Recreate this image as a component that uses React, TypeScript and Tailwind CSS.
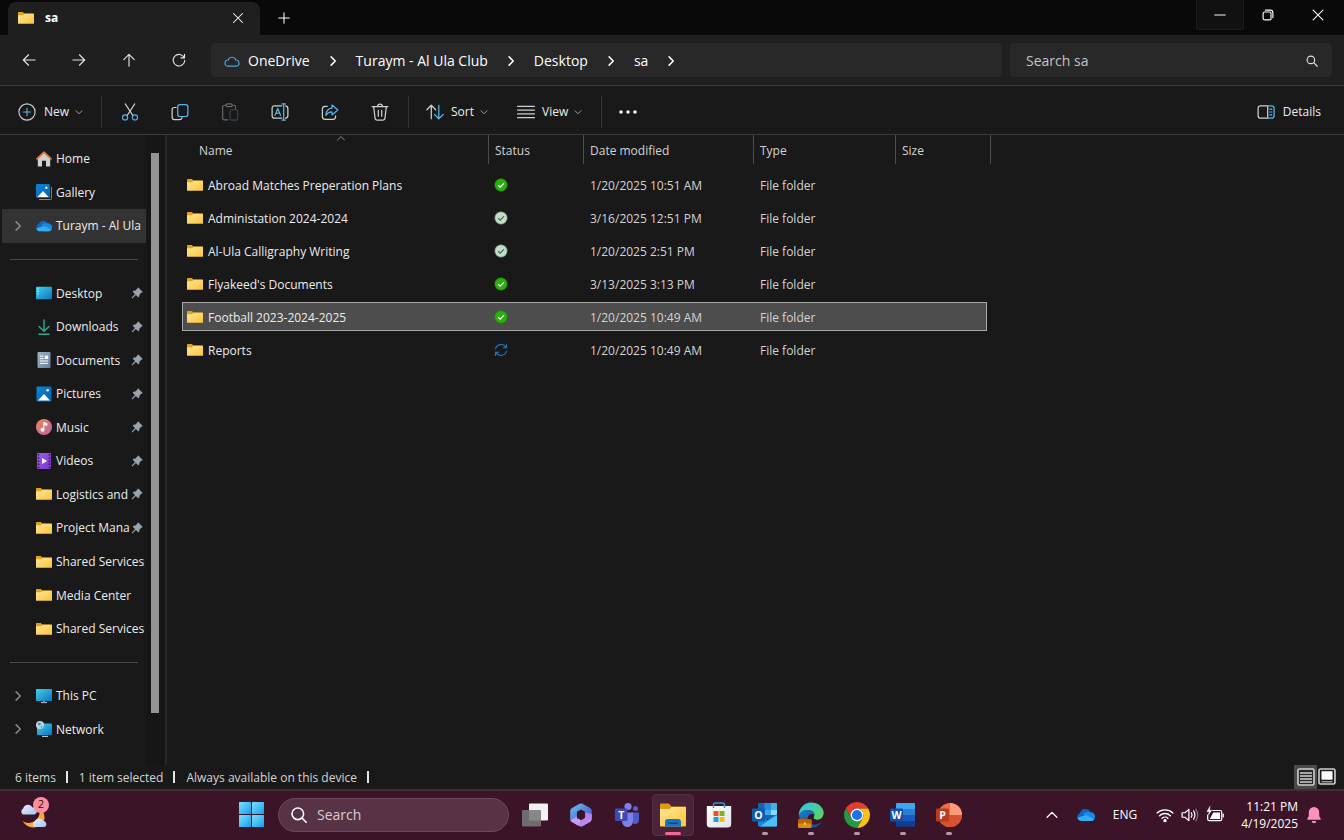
import type { ReactNode } from 'react';

type IconProps = { className?: string };

interface SideItem {
  label: string;
  icon: (p: IconProps) => ReactNode;
  pinned?: boolean;
  expandable?: boolean;
  active?: boolean;
}

interface FileRow {
  name: string;
  status: 'pinned' | 'local' | 'sync';
  date: string;
  selected?: boolean;
}

/* ---------- shared gradients ---------- */

function Gradients() {
  const list = [
    { id: 'folder', from: '#ffe69a', to: '#fcc436' },
    { id: 'blue', from: '#0a84d6', to: '#0563b0' },
    { id: 'teal', from: '#3fd3e4', to: '#0e72c4' },
    { id: 'music', from: '#f0855a', to: '#b3679f' },
    { id: 'video', from: '#a05cf0', to: '#7a35c8' },
    { id: 'doc', from: '#9fb4c8', to: '#61809c' },
    { id: 'win', from: '#7fe0ff', to: '#109fee' },
    { id: 'copilotA', from: '#6fc3f5', to: '#3a4cc0' },
    { id: 'copilotB', from: '#8a6ce8', to: '#d09af0' },
    { id: 'edgeA', from: '#2fc2ee', to: '#63d64c' },
    { id: 'edgeB', from: '#1a7fd0', to: '#0c4a96' },
    { id: 'store', from: '#ffffff', to: '#dfe3ea' },
    { id: 'cloud', from: '#e6effc', to: '#a9c4f0' },
  ];
  return (
    <svg className="absolute" width="0" height="0" aria-hidden="true">
      <defs>
        {list.map((g) => (
          <linearGradient key={g.id} id={g.id} x1="0" y1="0" x2="1" y2="1">
            <stop offset="0" stopColor={g.from} />
            <stop offset="1" stopColor={g.to} />
          </linearGradient>
        ))}
      </defs>
    </svg>
  );
}

/* ---------- small line icons ---------- */

function Line({ d, className = 'w-4 h-4', sw = 1.2, children }: { d?: string; className?: string; sw?: number; children?: ReactNode }) {
  return (
    <svg viewBox="0 0 16 16" className={className} fill="none" stroke="currentColor" strokeWidth={sw} strokeLinecap="round" strokeLinejoin="round" aria-hidden="true">
      {d && <path d={d} />}
      {children}
    </svg>
  );
}

const Chevron = ({ className = 'w-2 h-2 text-[#a0a0a0]' }: IconProps) => <Line className={className} sw={2} d="M2 5.5l6 6 6-6" />;
const ChevronRight = ({ className = 'w-3 h-3' }: IconProps) => <Line className={className} sw={2} d="M5.500 2.500L11 8l-5.500 5.500" />;

/* ---------- folder + sidebar icons ---------- */

const FolderIcon = ({ className = 'w-4 h-4' }: IconProps) => (
  <svg viewBox="0 0 16 16" className={className} aria-hidden="true">
    <path d="M0 2.600Q0 2 .6 2H4.800L6.400 3.400H15.400Q16 3.400 16 4V8H0Z" fill="#e0a21a" />
    <path d="M0 5.200H5L6.600 3.800H15.400Q16 3.800 16 4.400V13.200Q16 13.800 15.400 13.800H.6Q0 13.800 0 13.200Z" fill="url(#folder)" />
  </svg>
);

const HomeIcon = ({ className }: IconProps) => (
  <svg viewBox="0 0 16 16" className={className} aria-hidden="true">
    <path d="M1.800 7L8 1.500 14.200 7V15.500H10V9.800H6V15.500H1.800Z" fill="#d0d0d0" />
    <path d="M.9 7.800L8 1.200l7.100 6.600" fill="none" stroke="#e5733a" strokeWidth="1.700" strokeLinecap="round" strokeLinejoin="round" />
  </svg>
);

const PicturesIcon = ({ className }: IconProps) => (
  <svg viewBox="0 0 16 16" className={className} aria-hidden="true">
    <rect x=".5" y=".5" width="15" height="15" rx="1.200" fill="url(#blue)" />
    <path d="M2 14.500L8 8l6 6.500Z" fill="#fff" />
    <circle cx="11.600" cy="4.200" r="1.300" fill="#fff" />
  </svg>
);

const GalleryIcon = ({ className }: IconProps) => (
  <svg viewBox="0 0 16 16" className={className} aria-hidden="true">
    <path d="M3 15.500H14.600Q15.600 15.500 15.600 14.500V3" fill="none" stroke="#3d9be0" strokeWidth="1" />
    <rect x="0" y="0" width="14" height="14" rx="1.200" fill="url(#blue)" />
    <path d="M1.500 13L7 7l5.500 6Z" fill="#fff" />
    <circle cx="10.300" cy="3.800" r="1.200" fill="#fff" />
  </svg>
);

const OneDriveIcon = ({ className }: IconProps) => (
  <svg viewBox="0 0 16 16" className={className} aria-hidden="true">
    <path d="M3.800 13.300A3.800 3.800 0 0 1 2.700 6 5 5 0 0 1 11.900 5.500 3.900 3.900 0 0 1 12.400 13.300Z" fill="#0f66c4" />
    <path d="M5.500 6.600Q8 4.500 11.900 5.600A3.900 3.900 0 0 1 16 9.400 3.900 3.900 0 0 1 12.400 13.300H8Z" fill="#1a8ae0" />
    <path d="M3.800 13.300Q1 13 .2 10.400L7.200 8.300Q9 7.800 10.500 8.900L15.200 11.900Q14.200 13.300 12.400 13.300Z" fill="#35adf4" />
  </svg>
);

const DesktopIcon = ({ className }: IconProps) => (
  <svg viewBox="0 0 16 16" className={className} aria-hidden="true">
    <rect x="0" y="1.800" width="16" height="12.400" rx="1" fill="url(#teal)" />
    <path d="M1.400 4h1.300M1.400 6.500h1.300M1.400 9h1.300" stroke="#c9f6ff" strokeWidth="1" />
  </svg>
);

const DownloadsIcon = ({ className }: IconProps) => (
  <Line className={`${className} text-[#35a88a]`} sw={1.4} d="M8 1v11M3 7.500L8 12.200 13 7.500M3 15.200h10" />
);

const DocumentsIcon = ({ className }: IconProps) => (
  <svg viewBox="0 0 16 16" className={className} aria-hidden="true">
    <rect x="1.500" y="0" width="13" height="16" rx="1" fill="url(#doc)" />
    <path d="M4 4.200h3.500M4 6.600h3.500M4 9h8M4 11.400h8" stroke="#fff" strokeWidth="1" />
    <rect x="8.800" y="3.600" width="3.400" height="3.400" fill="#fff" />
  </svg>
);

const MusicIcon = ({ className }: IconProps) => (
  <svg viewBox="0 0 16 16" className={className} aria-hidden="true">
    <circle cx="8" cy="8" r="8" fill="url(#music)" />
    <circle cx="6.500" cy="10.800" r="2" fill="#fff" />
    <path d="M7.900 10.800V3.500L11 4.700V6.400L7.900 5.400" fill="#fff" stroke="#fff" strokeWidth="1" />
  </svg>
);

const VideosIcon = ({ className }: IconProps) => (
  <svg viewBox="0 0 16 16" className={className} aria-hidden="true">
    <rect x="1" y="0" width="14" height="16" rx="1" fill="url(#video)" />
    <path d="M2.500 1v14M13.500 1v14" stroke="#32105e" strokeWidth="1.400" strokeDasharray="1.500 1.700" />
    <path d="M6 5l5 3-5 3Z" fill="#fff" />
  </svg>
);

const PCIcon = ({ className }: IconProps) => (
  <svg viewBox="0 0 16 16" className={className} aria-hidden="true">
    <rect x="0" y="1" width="16" height="12" rx=".8" fill="url(#teal)" />
    <path d="M5 14.500h6" stroke="#b8c4cc" strokeWidth="1.200" />
    <path d="M7 13h2v1.500H7Z" fill="#7d8a92" />
  </svg>
);

const NetworkIcon = ({ className }: IconProps) => (
  <svg viewBox="0 0 16 16" className={className} aria-hidden="true">
    <rect x="1" y="2.500" width="15" height="11.500" rx=".8" fill="url(#teal)" />
    <path d="M6 15.400h6" stroke="#b8c4cc" strokeWidth="1.200" />
    <circle cx="4" cy="4" r="4" fill="#b9d3e2" />
    <path d="M1.500 2.500l2.500-1 1 1.700-2 1.300ZM4.500 5.500l2-.6-.8 2.200Z" fill="#3a83b5" />
  </svg>
);

const PinIcon = () => (
  <svg viewBox="0 0 12 12" className="w-3 h-3 shrink-0" aria-hidden="true">
    <path d="M7.300.6L11.500 4.700Q11.600 5.500 10.600 5.600L8.500 7.500Q8.700 9.500 7.400 10.400L4.900 8 1.300 11.400.6 10.800 4 7.100 1.700 4.700Q2.500 3.400 4.500 3.600L6.400 1.500Q6.500.5 7.300.6Z" fill="#9aa3ab" />
  </svg>
);

/* ---------- command bar icons ---------- */

const ICON = 'w-[18px] h-[18px]';

const NewIcon = () => (
  <Line className={ICON} sw={1}>
    <circle cx="8" cy="8" r="7.200" stroke="#d0d0d0" />
    <path d="M8 4.800v6.400M4.800 8h6.400" stroke="#55b4ee" />
  </Line>
);
const CutIcon = () => (
  <Line className={ICON} sw={1}>
    <path d="M3.800 .8L10.600 11.200M12.200 .8L5.400 11.200" stroke="#d0d0d0" />
    <circle cx="3.600" cy="12.800" r="2.300" stroke="#55b4ee" />
    <circle cx="12.400" cy="12.800" r="2.300" stroke="#55b4ee" />
  </Line>
);
const CopyIcon = () => (
  <Line className={ICON} sw={1.1}>
    <path d="M4.500 4H3Q1 4 1 6V12.500Q1 14.800 3.200 14.800H7.500Q9.500 14.800 9.800 13" stroke="#d0d0d0" />
    <rect x="6" y="1.500" width="9" height="10.500" rx="2" stroke="#55b4ee" />
  </Line>
);
const PasteIcon = () => (
  <Line className={ICON} sw={1}>
    <path d="M6 15H3Q1.500 15 1.500 13.500V3.500Q1.500 2 3 2H4.500M10 2h1.500Q13 2 13 3.500V5" stroke="#6a6a6a" />
    <rect x="4.500" y=".8" width="5.500" height="2.400" rx="1.200" stroke="#6a6a6a" />
    <rect x="8" y="6" width="6.800" height="9.200" rx="1.300" stroke="#31495a" />
  </Line>
);
const RenameIcon = () => (
  <Line className={ICON} sw={1.1}>
    <path d="M9.500 2.500H3.200Q1 2.500 1 4.700V11.300Q1 13.500 3.200 13.500H9.500M13 2.600Q15 3 15 5V11Q15 13 13 13.400" stroke="#d0d0d0" />
    <path d="M3.500 11L6 4.800 8.500 11M4.400 9h3.200M9.800 .8h3M9.800 15.200h3M11.300 .8v14.400" stroke="#55b4ee" />
  </Line>
);
const ShareIcon = () => (
  <Line className={ICON} sw={1.1}>
    <path d="M5.500 3H3.700Q1.200 3 1.200 5.500V12Q1.200 14.500 3.700 14.500H10.500Q13 14.500 13 12V11.500" stroke="#d0d0d0" />
    <path d="M9.800 1.800L15 6.300 9.800 10.600V8Q6.500 7.800 4.300 11 4.600 5 9.800 4.500Z" stroke="#55b4ee" />
  </Line>
);
const DeleteIcon = () => (
  <Line className={ICON} sw={1.1}>
    <path d="M1 3.200h14M5.700 3Q6 .9 8 .9T10.300 3M2.400 3.400L3.600 13.300Q3.800 15.200 5.600 15.200H10.400Q12.200 15.200 12.400 13.300L13.600 3.400M6.500 6.500v5.200M9.500 6.500v5.200" stroke="#d0d0d0" />
  </Line>
);
const SortIcon = () => (
  <Line className={ICON} sw={1.1}>
    <path d="M4.700 14V2M.8 6L4.700 2 8.600 6" stroke="#d0d0d0" />
    <path d="M11.400 2v12M7.600 10.200L11.400 14 15.300 10.200" stroke="#55b4ee" />
  </Line>
);
const ViewIcon = () => <Line className={`${ICON} text-[#d0d0d0]`} sw={1} d="M.5 3h15M.5 6.300h15M.5 9.700h15M.5 13h15" />;
const DetailsIcon = () => (
  <Line className={ICON} sw={1.1}>
    <path d="M9.500 2.500H3.200Q1 2.500 1 4.700V11.300Q1 13.500 3.200 13.500H9.500Z" stroke="#d0d0d0" />
    <path d="M9.500 2.500H13Q15.200 2.500 15.200 4.700V11.300Q15.200 13.500 13 13.500H9.500M11.400 5.500h1.800M11.400 8h1.800M11.400 10.500h1.800" stroke="#55b4ee" />
  </Line>
);

/* ---------- status icons ---------- */

function StatusIcon({ status }: { status: FileRow['status'] }) {
  if (status === 'sync') {
    return (
      <svg viewBox="0 0 14 14" className="w-[14px] h-[14px]" fill="none" stroke="#1f78c4" strokeWidth="1.100" strokeLinecap="round" role="img" aria-label="Syncing">
        <path d="M1.500 5.800A5.700 5.700 0 0 1 12 4.500M12.500 1.600V4.700H9.300M12.500 8.200A5.700 5.700 0 0 1 2 9.500M1.500 12.400V9.300H4.700" />
      </svg>
    );
  }
  const pinned = status === 'pinned';
  return (
    <svg viewBox="0 0 14 14" className="w-[14px] h-[14px]" role="img" aria-label={pinned ? 'Always available' : 'Available on this device'}>
      <circle cx="7" cy="7" r="6.200" fill={pinned ? '#2bb00d' : '#c3dccb'} stroke={pinned ? '#1f8a08' : '#4f8a62'} strokeWidth=".6" />
      <path d="M4.200 7.200l2 1.900 3.700-3.700" fill="none" stroke={pinned ? '#fff' : '#3f6b4d'} strokeWidth="1.200" />
    </svg>
  );
}

/* ---------- taskbar icons ---------- */

const APP = 'w-[26px] h-[26px]';

const Letter = ({ x, children }: { x: number; children: string }) => (
  <text x={x} y="16.800" fontSize="10.500" fontWeight="700" fill="#fff" textAnchor="middle" fontFamily="Open Sans, sans-serif">
    {children}
  </text>
);

const TaskViewIcon = () => (
  <svg viewBox="0 0 26 26" className={APP} aria-hidden="true">
    <rect x="7" y="1.500" width="19" height="17" rx="1" fill="#f1f1f1" />
    <rect x="0" y="8" width="19" height="16.500" rx="1" fill="#77777a" opacity=".88" />
  </svg>
);

const M365Icon = () => (
  <svg viewBox="0 0 24 24" className="w-6 h-6" aria-hidden="true">
    <path d="M10.500 .8Q12 0 13.500 .8L21 5Q22.800 6 22.800 8V15L16 12V8.800L12 6.500 8 8.800V18L3 19Q1.200 18 1.200 16V8Q1.200 6 3 5Z" fill="url(#copilotA)" />
    <path d="M22.800 11V16Q22.800 18 21 19L13.500 23.200Q12 24 10.500 23.200L3 19 9.500 15.500 12 17.200 16 14.800V9Z" fill="url(#copilotB)" />
    <path d="M1.400 17.200L8 13.500V15.200L12 17.500 9 22.400 3 19Q1.800 18.400 1.400 17.200Z" fill="#c79bf2" />
    <path d="M11.500 7.500L16 9.800V14.500L12.500 16.500 8.500 14.500V9.300Z" fill="#3b1427" />
  </svg>
);

const TeamsIcon = () => (
  <svg viewBox="0 0 26 26" className={APP} aria-hidden="true">
    <circle cx="21.500" cy="6.500" r="2.500" fill="#5b62c5" />
    <circle cx="14" cy="4.500" r="3.600" fill="#7b83eb" />
    <path d="M18 10.500H25V17.500Q25 22 21 22 18 22 18 18Z" fill="#5059c9" />
    <path d="M8 10.500H19V18.500Q19 25 13.500 25 8 25 8 18.500Z" fill="#7b83eb" />
    <rect x="1" y="6.500" width="12.500" height="12.500" rx="1.200" fill="#4149b4" />
    <Letter x={7.2}>T</Letter>
  </svg>
);

const ExplorerIcon = () => (
  <svg viewBox="0 0 26 26" className={APP} aria-hidden="true">
    <path d="M0 2.500Q0 1.500 1 1.500H9L11.500 4.500H25Q26 4.500 26 5.500V12H0Z" fill="#dd9c12" />
    <path d="M0 7Q6 7 9.500 7L12 5H25Q26 5 26 6V23.500Q26 24.500 25 24.500H1Q0 24.500 0 23.500Z" fill="url(#folder)" />
    <path d="M5 24.500V20Q5 17 8 17H18Q21 17 21 20V24.500Z" fill="#1674c6" />
    <rect x="8" y="20.500" width="10" height="1.500" rx=".7" fill="#0b4a8a" />
  </svg>
);

const StoreIcon = () => (
  <svg viewBox="0 0 26 26" className={APP} aria-hidden="true">
    <path d="M7.500 6V3Q7.500 1 9.500 1H16.500Q18.500 1 18.500 3V6" fill="none" stroke="#2f96d8" strokeWidth="1.500" />
    <path d="M.8 4H25.200V22Q25.200 25.500 21.700 25.500H4.300Q.8 25.500 .8 22Z" fill="url(#store)" />
    <path d="M7.500 4V6M18.500 4V6" stroke="#2f96d8" strokeWidth="1.500" />
    <path d="M7.500 9H12.500V14H7.500Z" fill="#f04f23" />
    <path d="M13.500 9H18.500V14H13.500Z" fill="#7cb81b" />
    <path d="M7.500 15h5v5H7.500Z" fill="#1b9fe5" />
    <path d="M13.500 15H18.500v5H13.500Z" fill="#fab90f" />
  </svg>
);

const OutlookIcon = () => (
  <svg viewBox="0 0 26 26" className={APP} aria-hidden="true">
    <rect x="6" y="1" width="19" height="16" rx="1.200" fill="#1066b5" />
    <path d="M12.500 1H19V8H12.500Z" fill="#2a8bd8" />
    <path d="M19 1H24Q25 1 25 2V8H19Z" fill="#43b0ee" />
    <path d="M12.500 8H19V13H12.500Z" fill="#3aa7ea" />
    <path d="M19 8H25V13H19Z" fill="#8ad8fa" />
    <path d="M6 12L15.500 18 25 12V23.500Q25 24.500 24 24.500H7Q6 24.500 6 23.500Z" fill="#1a86da" />
    <path d="M25 13V23.500Q25 24.500 24 24.500H8L18 17.500Z" fill="#4cc0f5" />
    <rect x="0" y="6.500" width="13" height="13" rx="1.200" fill="#0e5cab" />
    <Letter x={6.5}>O</Letter>
  </svg>
);

const EdgeIcon = () => (
  <svg viewBox="0 0 26 26" className={APP} aria-hidden="true">
    <path d="M.8 13A12.300 12.300 0 0 1 13.300 .6Q21 .6 24.700 7 27 12 24 15.800 20.500 18.800 16.500 17 15 16 16.300 14 17 9 11 8 4 8 .8 13Z" fill="url(#edgeA)" />
    <path d="M.8 13Q3.500 7.500 10.500 8 16 8.600 16.700 13 12 10.500 10 14.500 8.500 20.500 15 22.500 19 23.500 23.500 20.300 19 26.800 11.500 25.200 1.500 22.500 .8 13Z" fill="url(#edgeB)" />
    <rect x="0" y="17.500" width="13.500" height="8.500" rx="1" fill="#dc8a16" />
    <path d="M0 17.500h13.500v4H0Z" fill="#b8620a" />
    <path d="M4.500 17.500V16h4.500v1.500" fill="none" stroke="#8a4808" strokeWidth="1" />
    <rect x="5.800" y="20.500" width="2" height="2.200" fill="#ffd166" />
  </svg>
);

const ChromeIcon = () => (
  <svg viewBox="0 0 24 24" className={APP} aria-hidden="true">
    <path d="M12 6H22.390A12 12 0 0 0 1.610 6L6.800 15A6 6 0 0 1 12 6Z" fill="#e33b2e" />
    <path d="M17.200 15L12 24A12 12 0 0 0 22.390 6H12A6 6 0 0 1 17.200 15Z" fill="#fbc116" />
    <path d="M6.800 15L1.610 6A12 12 0 0 0 12 24L17.200 15A6 6 0 0 1 6.800 15Z" fill="#229a46" />
    <circle cx="12" cy="12" r="6" fill="#fff" />
    <circle cx="12" cy="12" r="4.700" fill="#1a73e8" />
  </svg>
);

const WordIcon = () => (
  <svg viewBox="0 0 26 26" className={APP} aria-hidden="true">
    <path d="M6 2.200Q6 1 7.200 1H24Q25 1 25 2.200V7H6Z" fill="#41a5ee" />
    <path d="M6 7H25V13H6Z" fill="#2b7cd3" />
    <path d="M6 13H25V19H6Z" fill="#185abd" />
    <path d="M6 19H25V23.500Q25 24.700 24 24.700H7.200Q6 24.700 6 23.500Z" fill="#103f91" />
    <rect x="0" y="6.500" width="13" height="13" rx="1.200" fill="#174fa8" />
    <Letter x={6.5}>W</Letter>
  </svg>
);

const PowerPointIcon = () => (
  <svg viewBox="0 0 26 26" className={APP} aria-hidden="true">
    <circle cx="14" cy="13" r="12" fill="#ed6c47" />
    <path d="M14 1A12 12 0 0 1 26 13H14Z" fill="#ff9a78" />
    <path d="M2 13H26A12 12 0 0 1 2 13Z" fill="#d35230" />
    <rect x="0" y="6.500" width="13" height="13" rx="1.200" fill="#b83c1d" />
    <Letter x={6.5}>P</Letter>
  </svg>
);

const WeatherIcon = () => (
  <svg viewBox="0 0 28 28" className="w-7 h-7" aria-hidden="true">
    <path d="M19 7A11 11 0 0 1 2.500 20Q7 27 14.500 26.500 23 25.500 24.500 18 25 11 19 7Z" fill="#f6a93b" />
    <path d="M3 13.500A3.300 3.300 0 0 1 3.200 7.600 5 5 0 0 1 12.500 6.500 3.500 3.500 0 0 1 14 13.500Z" fill="url(#cloud)" />
    <path d="M14.500 26A3 3 0 0 1 14.700 20.600 4.500 4.500 0 0 1 23 20 3.100 3.100 0 0 1 24.300 26Z" fill="url(#cloud)" />
  </svg>
);

/* ---------- data ---------- */

const sideItems: (SideItem | null)[] = [
  { label: 'Home', icon: HomeIcon },
  { label: 'Gallery', icon: GalleryIcon },
  { label: 'Turaym - Al Ula', icon: OneDriveIcon, expandable: true, active: true },
  null,
  { label: 'Desktop', icon: DesktopIcon, pinned: true },
  { label: 'Downloads', icon: DownloadsIcon, pinned: true },
  { label: 'Documents', icon: DocumentsIcon, pinned: true },
  { label: 'Pictures', icon: PicturesIcon, pinned: true },
  { label: 'Music', icon: MusicIcon, pinned: true },
  { label: 'Videos', icon: VideosIcon, pinned: true },
  { label: 'Logistics and', icon: FolderIcon, pinned: true },
  { label: 'Project Mana', icon: FolderIcon, pinned: true },
  { label: 'Shared Services', icon: FolderIcon },
  { label: 'Media Center', icon: FolderIcon },
  { label: 'Shared Services', icon: FolderIcon },
  null,
  { label: 'This PC', icon: PCIcon, expandable: true },
  { label: 'Network', icon: NetworkIcon, expandable: true },
];

const files: FileRow[] = [
  { name: 'Abroad Matches Preperation Plans', status: 'pinned', date: '1/20/2025 10:51 AM' },
  { name: 'Administation 2024-2024', status: 'local', date: '3/16/2025 12:51 PM' },
  { name: 'Al-Ula Calligraphy Writing', status: 'local', date: '1/20/2025 2:51 PM' },
  { name: "Flyakeed's Documents", status: 'pinned', date: '3/13/2025 3:13 PM' },
  { name: 'Football 2023-2024-2025', status: 'pinned', date: '1/20/2025 10:49 AM', selected: true },
  { name: 'Reports', status: 'sync', date: '1/20/2025 10:49 AM' },
];

const commands = [
  { label: 'Cut', icon: CutIcon },
  { label: 'Copy', icon: CopyIcon },
  { label: 'Paste', icon: PasteIcon },
  { label: 'Rename', icon: RenameIcon },
  { label: 'Share', icon: ShareIcon },
  { label: 'Delete', icon: DeleteIcon },
];

const apps = [
  { label: 'Task view', icon: TaskViewIcon },
  { label: 'Microsoft 365', icon: M365Icon },
  { label: 'Teams', icon: TeamsIcon },
  { label: 'File Explorer', icon: ExplorerIcon, active: true },
  { label: 'Store', icon: StoreIcon },
  { label: 'Outlook', icon: OutlookIcon, running: true },
  { label: 'Edge', icon: EdgeIcon, running: true },
  { label: 'Chrome', icon: ChromeIcon, running: true },
  { label: 'Word', icon: WordIcon, running: true },
  { label: 'PowerPoint', icon: PowerPointIcon, running: true },
];

/* ---------- sections ---------- */

function TitleBar() {
  return (
    <header className="flex h-[35px] items-end bg-[#090909] pl-2">
      <div className="flex h-[33px] w-[252px] items-center rounded-t-lg bg-[#1f1f1f] pb-[2px] pl-[10px] pr-4">
        <FolderIcon className="w-4 h-4" />
        <span className="ml-[11px] flex-1 text-xs font-bold text-white">sa</span>
        <button aria-label="Close tab" className="text-white">
          <Line className="w-3 h-3" sw={1.4} d="M2 2l12 12M14 2L2 14" />
        </button>
      </div>
      <button aria-label="New tab" className="flex h-[33px] w-12 items-center justify-center pb-[2px] text-white">
        <Line className="w-3 h-3" sw={1.4} d="M8 1v14M1 8h14" />
      </button>
      <div className="ml-auto flex self-start text-white">
        <button aria-label="Minimize" className="flex h-[30px] w-12 items-center justify-center border border-t-0 border-[#1c1c1c] bg-[#111]">
          <Line className="w-3 h-3" sw={1.3} d="M1 8h14" />
        </button>
        <button aria-label="Restore" className="flex h-[30px] w-12 items-center justify-center">
          <Line className="w-3 h-3" sw={1.5}>
            <rect x="1.500" y="4" width="10.500" height="10.500" rx="2" />
            <path d="M4.500 1.500H11Q14.500 1.500 14.500 5V11.500" />
          </Line>
        </button>
        <button aria-label="Close" className="flex h-[30px] w-[52px] items-center justify-center">
          <Line className="w-3 h-3" sw={1.4} d="M1.500 1.500l13 13M14.500 1.500l-13 13" />
        </button>
      </div>
    </header>
  );
}

const navButtons = [
  { label: 'Back', d: 'M15 8H1.500M7.500 2L1.500 8l6 6' },
  { label: 'Forward', d: 'M1 8h13.500M8.500 2l6 6-6 6' },
  { label: 'Up', d: 'M8 15V1.500M2 7.500l6-6 6 6' },
  { label: 'Refresh', d: 'M14 5.500A6.600 6.600 0 1 0 14.600 8.500M14.300 1.500V5.600H10.200' },
];

function NavBar() {
  return (
    <div className="flex h-[50px] items-center bg-[#1f1f1f] pl-1 pr-3">
      {navButtons.map((b) => (
        <button key={b.label} aria-label={b.label} className="flex h-8 w-[50px] shrink-0 items-center justify-center text-[#e4e4e4]">
          <Line className="w-[14px] h-[14px]" sw={1.3} d={b.d} />
        </button>
      ))}
      <nav aria-label="Address" className="ml-[7px] flex h-[34px] flex-1 items-center rounded bg-[#282828] pl-[13px] pt-px text-sm text-white">
        <svg viewBox="0 0 16 12" className="mr-2 h-3 w-4" fill="none" stroke="#4aa3d8" strokeWidth="1.200" aria-hidden="true">
          <path d="M4 11.200A3.100 3.100 0 0 1 4.200 5 4 4 0 0 1 11.800 5 3.100 3.100 0 0 1 12 11.200Z" />
        </svg>
        {['OneDrive', 'Turaym - Al Ula Club', 'Desktop', 'sa'].map((c) => (
          <span key={c} className="flex items-center">
            <a href="#" className="whitespace-nowrap">{c}</a>
            <ChevronRight className="mx-[17px] w-3 h-3" />
          </span>
        ))}
      </nav>
      <label className="ml-2 flex h-[34px] w-[322px] items-center rounded bg-[#282828] px-4 pt-px text-sm">
        <span className="sr-only">Search folder</span>
        <input type="text" placeholder="Search sa" className="h-full min-w-0 flex-1 bg-transparent outline-none placeholder:text-[#c4c4c4]" />
        <Line className="-mr-[2px] w-3 h-3 text-[#e4e4e4]" sw={1.5}>
          <circle cx="6.500" cy="6.500" r="5" />
          <path d="M10.300 10.300L15 15" />
        </Line>
      </label>
    </div>
  );
}

function CommandBar() {
  return (
    <div className="flex h-[50px] items-center border-y border-[#3c3c3c] bg-[#191919] pt-[3px] text-xs text-[#ededed]">
      <button className="flex w-[101px] shrink-0 items-center pl-[18px]">
        <NewIcon />
        <span className="ml-2 mr-[6px]">New</span>
        <Chevron />
      </button>
      <div className="mr-[3px] h-8 w-px bg-[#333]" />
      {commands.map(({ label, icon: Icon }) => (
        <button key={label} aria-label={label} className="flex h-8 w-[50px] shrink-0 items-center justify-center">
          <Icon />
        </button>
      ))}
      <div className="ml-[3px] h-8 w-px bg-[#333]" />
      <button className="ml-[17px] flex items-center">
        <SortIcon />
        <span className="ml-[7px] mr-[6px]">Sort</span>
        <Chevron />
      </button>
      <button className="ml-[29px] flex items-center">
        <ViewIcon />
        <span className="ml-[7px] mr-[6px]">View</span>
        <Chevron />
      </button>
      <div className="ml-[19px] h-8 w-px bg-[#333]" />
      <button aria-label="See more" className="ml-4 flex items-center">
        <svg viewBox="0 0 20 20" className="w-5 h-5" fill="#f0f0f0" aria-hidden="true">
          <circle cx="3" cy="10" r="1.800" />
          <circle cx="10" cy="10" r="1.800" />
          <circle cx="17" cy="10" r="1.800" />
        </svg>
      </button>
      <button className="ml-auto mr-[23px] flex items-center gap-2">
        <DetailsIcon />
        Details
      </button>
    </div>
  );
}

function Sidebar() {
  return (
    <aside className="flex w-[167px] shrink-0 border-r-2 border-[#282828]">
      <ul className="flex min-w-0 flex-1 flex-col pb-[19px] pl-[2px] pt-[7px]">
        {sideItems.map((item, i) => {
          if (!item) {
            return (
              <li key={i} className="flex flex-1 items-center px-2" role="separator">
                <div className="h-px w-full bg-[#4a4a4a]" />
              </li>
            );
          }
          const Icon = item.icon;
          return (
            <li key={i} className={`flex min-h-6 flex-1 ${item.active ? 'bg-[#333]' : ''}`}>
              <a href="#" className="flex min-w-0 flex-1 items-center pr-[3px] text-xs text-[#ececec]">
                <span className="flex w-[34px] shrink-0 pl-[10px]">{item.expandable && <ChevronRight className="w-3 h-3 text-[#8a8a8a]" />}</span>
                <Icon className="w-4 h-4 shrink-0" />
                <span className="ml-1 min-w-0 flex-1 whitespace-nowrap pt-px">{item.label}</span>
                {item.pinned && <PinIcon />}
              </a>
            </li>
          );
        })}
      </ul>
      <div className="w-[19px] bg-[#161616] pb-[52px] pl-[5px] pt-[18px]">
        <div className="h-full w-2 bg-[#949494]" />
      </div>
    </aside>
  );
}

const HEAD = 'flex h-[29px] items-center border-r border-[#4c4c4c] pt-[2px] font-normal';

function FileTable() {
  return (
    <main className="min-w-0 flex-1 pl-[15px]">
      <table className="-mt-1 w-[805px] table-fixed border-separate border-spacing-x-0 border-spacing-y-1 text-left text-xs text-[#d4d4d4]">
        <thead>
          <tr className="h-[31px] align-top">
            <th scope="col" className="relative w-[307px] p-0">
              <button className={`${HEAD} w-full pl-[17px]`}>Name</button>
              <Line className="absolute left-[155px] top-0 h-2 w-2 text-[#a8a8a8]" sw={1.6} d="M1 10l7-7 7 7" />
            </th>
            <th scope="col" className="w-[95px] p-0">
              <button className={`${HEAD} w-full pl-[6px]`}>Status</button>
            </th>
            <th scope="col" className="w-[170px] p-0">
              <button className={`${HEAD} w-full pl-[6px]`}>Date modified</button>
            </th>
            <th scope="col" className="w-[142px] p-0">
              <button className={`${HEAD} w-full pl-[6px]`}>Type</button>
            </th>
            <th scope="col" className="p-0">
              <button className={`${HEAD} w-[95px] pl-[6px]`}>Size</button>
            </th>
          </tr>
        </thead>
        <tbody>
          {files.map((f) => (
            <tr key={f.name} className={`h-[29px] ${f.selected ? 'bg-[#4d4d4d] outline outline-1 -outline-offset-1 outline-[#a8a8a8]' : ''}`}>
              <td className="p-0 pl-[5px]">
                <span className="flex items-center gap-[5px] text-[#ececec]">
                  <FolderIcon className="w-4 h-4 shrink-0" />
                  <span className="pt-[2px]">{f.name}</span>
                </span>
              </td>
              <td className="p-0 pl-[5px]">
                <StatusIcon status={f.status} />
              </td>
              <td className="p-0 pl-[6px] pt-[2px]">{f.date}</td>
              <td className="p-0 pl-[6px] pt-[2px]">File folder</td>
              <td className="p-0" />
            </tr>
          ))}
        </tbody>
      </table>
    </main>
  );
}

function StatusBar() {
  return (
    <footer className="flex h-6 items-center bg-[#191919] pl-[15px] text-xs text-[#d4d4d4]">
      {['6 items', '1 item selected', 'Always available on this device'].map((t) => (
        <span key={t} className="flex items-center">
          <span className="pt-[2px]">{t}</span>
          <span className="ml-[10px] mr-[11px] h-3 w-[2px] bg-[#e6e6e6]" />
        </span>
      ))}
      <div className="ml-auto mr-2 flex items-center gap-px">
        <button aria-label="Details view" className="flex h-6 w-[23px] items-center justify-center bg-[#4a4a4a]">
          <svg viewBox="0 0 18 18" className="w-[18px] h-[18px]" aria-hidden="true">
            <rect x="1" y="1" width="16" height="16" rx="1.500" fill="#2a2a2a" stroke="#cfcfcf" strokeWidth="1.600" />
            <path d="M3 5h12M3 8h12M3 11h12M3 14h12" stroke="#cfcfcf" strokeWidth="1.400" />
          </svg>
        </button>
        <button aria-label="Large icons view">
          <svg viewBox="0 0 18 18" className="w-[18px] h-[18px]" aria-hidden="true">
            <rect x="1" y="1" width="16" height="15" rx="1.500" fill="#1d1d1d" stroke="#cfcfcf" strokeWidth="1.600" />
            <rect x="3.500" y="3.200" width="11" height="8.500" fill="#fff" />
            <path d="M3.500 13.800h11" stroke="#cfcfcf" strokeWidth="1" />
          </svg>
        </button>
      </div>
    </footer>
  );
}

function Taskbar() {
  return (
    <div className="flex h-[51px] items-center border-t-2 border-[#452a37] bg-[#3b1427] pb-[2px] text-white">
      <div className="w-[228px] shrink-0 pl-5">
        <button aria-label="Weather" className="relative flex">
          <WeatherIcon />
          <span className="absolute -top-[4px] left-[13px] flex h-4 w-4 items-center justify-center rounded-full bg-[#fc8ea0] text-[11px] text-[#2a0a14]">2</span>
        </button>
      </div>
      <button aria-label="Start" className="flex w-[47px] shrink-0 justify-center">
        <svg viewBox="0 0 25 25" className="w-[25px] h-[25px]" fill="url(#win)" aria-hidden="true">
          <rect width="12" height="12" rx=".5" />
          <rect x="13" width="12" height="12" rx=".5" />
          <rect y="13" width="12" height="12" rx=".5" />
          <rect x="13" y="13" width="12" height="12" rx=".5" />
        </svg>
      </button>
      <label className="mx-[3px] flex h-[34px] w-[231px] items-center gap-[10px] rounded-full border border-[#6b4a59] bg-[#573345] px-3">
        <Line className="w-4 h-4 shrink-0" sw={1.6}>
          <circle cx="6.800" cy="6.800" r="5.800" />
          <path d="M11.200 11.200L15.200 15.200" />
        </Line>
        <span className="sr-only">Search Windows</span>
        <input type="text" placeholder="Search" className="h-full min-w-0 flex-1 bg-transparent text-sm outline-none placeholder:text-[#d9cdd3]" />
      </label>
      {apps.map(({ label, icon: Icon, active, running }) => (
        <button key={label} aria-label={label} className="relative flex h-[42px] w-[46px] shrink-0 items-center justify-center">
          {active && <span className="absolute inset-y-0 inset-x-[2px] rounded border border-[#52303f] bg-[#4a2437]" />}
          <span className="relative">
            <Icon />
          </span>
          {active && <span className="absolute bottom-[1px] h-[3px] w-4 rounded-full bg-[#f2659b]" />}
          {running && <span className="absolute bottom-[1px] h-[3px] w-[6px] rounded-full bg-[#b39ca8]" />}
        </button>
      ))}
      <div className="ml-auto flex items-center pr-[22px] text-xs">
        <button aria-label="Show hidden icons" className="mr-[19px]">
          <Line className="w-3 h-3" sw={1.7} d="M1.500 11L8 4.500 14.500 11" />
        </button>
        <OneDriveIcon className="mr-[18px] w-[18px] h-[18px]" />
        <span className="mr-[19px]">ENG</span>
        <button aria-label="Network, volume and battery" className="flex items-center gap-[7px]">
          <Line className="w-[18px] h-[18px]" sw={1.2}>
            <path d="M1 6.200A10.200 10.200 0 0 1 15 6.200M3.200 8.600A7 7 0 0 1 12.800 8.600M5.400 10.900A3.700 3.700 0 0 1 10.600 10.900" />
            <circle cx="8" cy="13" r=".9" fill="currentColor" />
          </Line>
          <Line className="w-[18px] h-[18px]" sw={1.1}>
            <path d="M1 6H3.500L7 3V13L3.500 10H1ZM9.200 6Q10.500 8 9.200 10M11.200 4.300Q13.500 8 11.200 11.700" />
            <path d="M13.200 2.800Q16.500 8 13.200 13.200" stroke="#8a6c7a" />
          </Line>
          <Line className="w-[18px] h-[18px]" sw={1.1}>
            <path d="M6 4H12.500Q14 4 14 5.500V11.500Q14 13 12.500 13H3Q1.500 13 1.500 11.500V8" />
            <path d="M3.500 11.300L6.500 5.700H12.500V11.500H3.500Z" fill="currentColor" stroke="none" />
            <path d="M15.300 7.300v2.400" />
            <path d="M3.500 .5L.8 5H3L2 8 5.200 3.800H3.200Z" fill="currentColor" strokeWidth=".4" />
          </Line>
        </button>
        <div className="ml-[17px] mr-2 text-right leading-[17px]">
          <div>11:21 PM</div>
          <div>4/19/2025</div>
        </div>
        <button aria-label="Notifications">
          <svg viewBox="0 0 16 18" className="w-4 h-[18px]" fill="#ff8fc0" aria-hidden="true">
            <path d="M8 1A5.200 5.200 0 0 1 13.200 6.200V10L14.800 13Q15 13.800 14.200 13.800H1.800Q1 13.800 1.200 13L2.800 10V6.200A5.200 5.200 0 0 1 8 1Z" />
            <path d="M5.800 15H10.200A2.200 2.200 0 0 1 5.800 15Z" />
          </svg>
        </button>
      </div>
    </div>
  );
}

export default function App() {
  return (
    <div className="flex min-h-screen flex-col overflow-hidden bg-[#191919] font-['Open_Sans','Noto_Sans',sans-serif]">
      <Gradients />
      <TitleBar />
      <NavBar />
      <CommandBar />
      <div className="flex flex-1">
        <Sidebar />
        <FileTable />
      </div>
      <StatusBar />
      <Taskbar />
    </div>
  );
}
